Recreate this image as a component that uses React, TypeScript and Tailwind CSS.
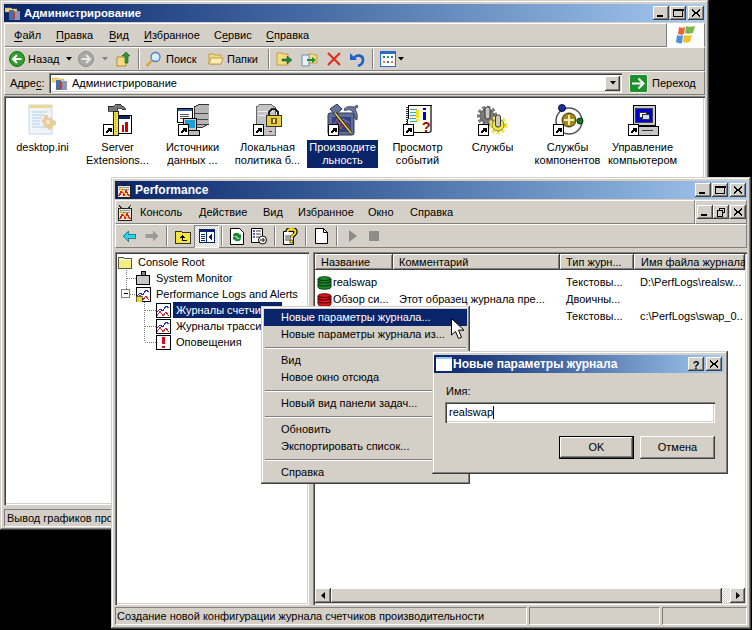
import React from 'react';

const frame = 'bg-[#d4d0c8] shadow-[inset_-1px_-1px_#404040,inset_1px_1px_#d4d0c8,inset_-2px_-2px_#808080,inset_2px_2px_#fff]';
const btn = 'bg-[#d4d0c8] shadow-[inset_-1px_-1px_#404040,inset_1px_1px_#fff,inset_-2px_-2px_#808080]';
const sunken = 'shadow-[inset_1px_1px_#808080,inset_2px_2px_#404040,inset_-1px_-1px_#fff,inset_-2px_-2px_#d4d0c8]';
const thin = 'border border-t-white border-l-white border-r-[#808080] border-b-[#808080]';
const thinIn = 'border border-t-[#808080] border-l-[#808080] border-r-white border-b-white';
const titleBg = 'bg-gradient-to-r from-[#0a246a] to-[#a6caf0]';
const dither = 'bg-[repeating-conic-gradient(#fff_0_25%,#d4d0c8_0_50%)] bg-[length:2px_2px]';

const Sep = () => <div className="mx-px h-[20px] w-[2px] border-l border-r border-l-[#808080] border-r-white" />;

const CapBtn = ({ kind }: { kind: 'min' | 'max' | 'close' | 'help' | 'restore' }) => (
  <div className={`flex h-[14px] w-[16px] items-center justify-center ${btn}`}>
    <svg width="12" height="10" viewBox="0 0 12 10" shapeRendering="crispEdges">
      {kind === 'min' && <rect x="2" y="7" width="6" height="2" fill="#000" />}
      {kind === 'max' && <path d="M1.5 1.5h9v7h-9zM1 1h10v1H1z" fill="none" stroke="#000" />}
      {kind === 'close' && <path d="M2.5 1l3.5 3.5L9.5 1l1 1L7 5l3.5 3-1 1L6 5.5 2.5 9l-1-1L5 5 1.5 2z" fill="#000" />}
      {kind === 'help' && <text x="6" y="9.5" textAnchor="middle" fontSize="11" fontWeight="700" fontFamily="Liberation Sans">?</text>}
      {kind === 'restore' && <path d="M4.5 3V1h5v4.500H7.5M2 3.500h5v5.500H2z" fill="none" stroke="#000" />}
    </svg>
  </div>
);

const Shortcut = () => (
  <g shapeRendering="crispEdges">
    <rect x="1.5" y="20.5" width="10" height="11" fill="#fff" stroke="#000" />
    <path d="M4 29l4-4M5.5 24.5h3.500V28" fill="none" stroke="#000" strokeWidth="1.5" />
  </g>
);

const AdminSmall = () => (
  <svg width="16" height="16" viewBox="0 0 16 16">
    <path d="M0 3h6l1 1h5v3H0z" fill="#f3d77e" stroke="#b99a3c" strokeWidth=".5" />
    <rect x="4" y="5" width="5" height="10" fill="#4a6fa8" />
    <rect x="9" y="6" width="6" height="9" fill="#8a97b5" />
    <rect x="8" y="7" width="2" height="7" fill="#c7362a" />
  </svg>
);

const PerfSmall = () => (
  <svg width="16" height="16" viewBox="0 0 16 16" shapeRendering="crispEdges">
    <rect x="1.5" y="3.5" width="13" height="12" fill="#e8e4d8" stroke="#222" />
    <path d="M3 5h10M3 7h10" stroke="#9a9a9a" />
    <path d="M3 14l3-6 2 5 2-4 3 5" fill="none" stroke="#d0202a" strokeWidth="1.5" />
    <path d="M4 6l7 8" stroke="#e8d030" strokeWidth="1.5" />
    <path d="M2 0l3 4M14 0l-3 4" stroke="#333" />
  </svg>
);

const DesktopIni = () => (
  <svg width="32" height="32" viewBox="0 0 32 32">
    <rect x="2" y="1" width="23" height="29" fill="#eef4fc" stroke="#cdd6e4" />
    <rect x="2" y="1" width="23" height="3" fill="#ecd992" />
    <path d="M5 8h15M5 11h12M5 14h10M5 17h8M5 20h8M5 23h14" stroke="#b8cce8" />
    <path d="M17 11h4v3l3-1 2 3 3 1v4l-3 1-1 3-3 1-2-2-3-1-1-4-2-2 3-3z" fill="#e8cf9a" />
    <circle cx="21" cy="18" r="2" fill="#f6ead0" />
  </svg>
);

const ServerExt = () => (
  <svg width="32" height="32" viewBox="0 0 32 32" shapeRendering="crispEdges">
    <path d="M6 2h6l2-2h4l6 5-3 1-3-2h-3v3h-9z" fill="#777" stroke="#111" strokeWidth=".7" />
    <rect x="13" y="11" width="16" height="18" fill="#fff" stroke="#000" />
    <rect x="14" y="12" width="14" height="3" fill="#0a246a" />
    <rect x="20" y="21" width="2" height="7" fill="#c00" />
    <rect x="23" y="18" width="3" height="10" fill="#c00" />
    <rect x="11" y="7" width="5" height="24" fill="#f0e040" stroke="#222" />
    <path d="M13 9v20" stroke="#999" strokeDasharray="1 1" />
    <Shortcut />
  </svg>
);

const DataSources = () => (
  <svg width="32" height="32" viewBox="0 0 32 32" shapeRendering="crispEdges">
    <path d="M17 3l6-3h9v20l-6 3h-9z" fill="#b6b6b6" stroke="#333" />
    <path d="M18 9h13M18 15h13M18 20h13" stroke="#444" />
    <rect x="0.5" y="4.5" width="15" height="14" fill="#fff" stroke="#000" />
    <rect x="1" y="5" width="14" height="2" fill="#2a5db0" />
    <path d="M3 10h9M3 12h9M3 14h7" stroke="#555" />
    <rect x="6.5" y="14.5" width="13" height="12" fill="#ccc" stroke="#000" />
    <rect x="8" y="16" width="10" height="8" fill="#18a0d8" />
    <rect x="10" y="26.5" width="12" height="5" fill="#bbb" stroke="#000" />
    <Shortcut />
  </svg>
);

const LocalPolicy = () => (
  <svg width="32" height="32" viewBox="0 0 32 32" shapeRendering="crispEdges">
    <path d="M4 3l5-3h9l5 3v28H4z" fill="#c4c4c4" stroke="#666" />
    <path d="M6 7h15M6 11h15" stroke="#eee" />
    <rect x="17" y="27" width="3" height="1" fill="#c00" />
    <path d="M17 12V8l3-3h3l3 3v4" fill="none" stroke="#222" strokeWidth="2" />
    <rect x="14.5" y="11.5" width="15" height="11" fill="#e6cf3a" stroke="#333" />
    <rect x="19" y="14" width="6" height="6" fill="#6f5a10" />
    <rect x="21" y="15" width="2" height="4" fill="#f6e98a" />
    <Shortcut />
  </svg>
);

const Perf = () => (
  <svg width="32" height="32" viewBox="0 0 32 32">
    <rect x="1" y="9" width="26" height="22" rx="2" fill="#5f6f99" stroke="#2a3350" />
    <rect x="5" y="13" width="19" height="15" fill="#35427e" />
    <path d="M6 24l4-9 4 10 4-8 5 8" fill="none" stroke="#c0455c" />
    <path d="M6 19l5 3 5-7 7 4" fill="none" stroke="#5e88e0" />
    <path d="M3 5l7-5 5 5-7 6z" fill="#67749a" stroke="#2a3350" />
    <path d="M8 9l16 20" stroke="#222" strokeWidth="3" />
    <path d="M8 9l16 20" stroke="#e8d84a" strokeWidth="1.5" />
    <path d="M17 5c3-3 7-3 10-2l3-2 1 2-3 2c2 3 3 7 2 11l-2-1c0-3-1-5-3-8-3-2-5-1-7 0z" fill="#67749a" stroke="#2a3350" strokeWidth=".7" />
    <Shortcut />
  </svg>
);

const EventLog = () => (
  <svg width="32" height="32" viewBox="0 0 32 32" shapeRendering="crispEdges">
    <path d="M7 1.5h22v25l-2 2H5z" fill="#fdfbe8" stroke="#000" />
    <path d="M29 2v25l-2 2" fill="none" stroke="#666" strokeWidth="2" />
    <path d="M5 3v19" stroke="#333" strokeWidth="2" strokeDasharray="1 1" />
    <path d="M8 5h7M8 8h6M8 11h7M8 14h6M8 17h7" stroke="#2aa8c8" />
    <rect x="14" y="6" width="3" height="8" fill="#ffe000" />
    <rect x="14" y="15" width="3" height="2" fill="#ffe000" />
    <rect x="21" y="4" width="3" height="2" fill="#0000d0" />
    <rect x="21" y="8" width="3" height="8" fill="#0000d0" />
    <text x="20" y="28" fontSize="14" fontWeight="700" fill="#8a1010" fontFamily="Liberation Sans">?</text>
    <Shortcut />
  </svg>
);

const Gear = ({ x, y, r, fill }: { x: number; y: number; r: number; fill: string }) => (
  <g>
    <circle cx={x} cy={y} r={r + 1.5} fill="none" stroke={fill} strokeWidth="3.5" strokeDasharray="3 2" />
    <circle cx={x} cy={y} r={r} fill={fill} stroke="#333" strokeWidth=".6" />
  </g>
);

const Services = () => (
  <svg width="32" height="32" viewBox="0 0 32 32">
    <Gear x={10} y={12} r={7} fill="#7c7c7c" />
    <rect x="8" y="3" width="5" height="12" rx="2" fill="#c8c8c8" stroke="#333" />
    <Gear x={21} y={21} r={6} fill="#f0e63c" />
    <rect x="18.5" y="11" width="5" height="12" rx="2" fill="#c8c8c8" stroke="#333" />
    <Shortcut />
  </svg>
);

const Components = () => (
  <svg width="32" height="32" viewBox="0 0 32 32">
    <circle cx="17" cy="17" r="13" fill="none" stroke="#555" strokeWidth="1.5" />
    <circle cx="17" cy="16" r="7" fill="#a08a20" stroke="#3a3000" />
    <path d="M17 11v10M12 16h10" stroke="#f6eeb0" strokeWidth="2" />
    <circle cx="10" cy="4" r="3.5" fill="#1c2f9e" stroke="#0a1040" />
    <circle cx="28" cy="17" r="3" fill="#0c7a20" stroke="#033010" />
    <Shortcut />
  </svg>
);

const Computer = () => (
  <svg width="32" height="32" viewBox="0 0 32 32" shapeRendering="crispEdges">
    <path d="M6 1.5h22v20H6z" fill="#c8c8c8" stroke="#000" />
    <rect x="8" y="4" width="17" height="14" fill="#0000c8" stroke="#444" />
    <rect x="12" y="8" width="7" height="5" fill="#fff" stroke="#333" />
    <rect x="15" y="10" width="7" height="5" fill="#cde" stroke="#333" />
    <path d="M3 22.5h28v9H3z" fill="#c8c8c8" stroke="#000" />
    <rect x="15" y="26" width="11" height="1" fill="#333" />
    <Shortcut />
  </svg>
);

const items: { icon: React.ReactNode; lines: string[]; selected?: boolean }[] = [
  { icon: <DesktopIni />, lines: ['desktop.ini'] },
  { icon: <ServerExt />, lines: ['Server', 'Extensions...'] },
  { icon: <DataSources />, lines: ['Источники', 'данных ...'] },
  { icon: <LocalPolicy />, lines: ['Локальная', 'политика б...'] },
  { icon: <Perf />, lines: ['Производите', 'льность'], selected: true },
  { icon: <EventLog />, lines: ['Просмотр', 'событий'] },
  { icon: <Services />, lines: ['Службы'] },
  { icon: <Components />, lines: ['Службы', 'компонентов'] },
  { icon: <Computer />, lines: ['Управление', 'компьютером'] },
];

const Acc = ({ a, b = '', pre = '' }: { a: string; b?: string; pre?: string }) => (
  <span>
    {pre}
    <span className="underline underline-offset-2">{a}</span>
    {b}
  </span>
);

const RoundArrow = ({ gray }: { gray?: boolean }) => (
  <svg width="16" height="16" viewBox="0 0 16 16">
    <circle cx="8" cy="8" r="7.5" fill={gray ? '#a9a9a5' : '#2f9e2f'} stroke={gray ? '#8c8c88' : '#1b6e1b'} />
    {gray ? (
      <path d="M3.5 8h8M8 4l4 4-4 4" fill="none" stroke="#e8e8e4" strokeWidth="2" />
    ) : (
      <path d="M12.5 8h-8M8 4L4 8l4 4" fill="none" stroke="#fff" strokeWidth="2" />
    )}
  </svg>
);

const Caret = ({ className = '' }: { className?: string }) => (
  <svg width="6" height="4" viewBox="0 0 6 4" className={className}>
    <path d="M0 0h6L3 3.5z" fill="currentColor" />
  </svg>
);

const FolderSmall = ({ open }: { open?: boolean }) => (
  <svg width="16" height="16" viewBox="0 0 16 16">
    <path d="M1 3h5l1 1h6v9H1z" fill="#f0d98a" stroke="#c0a040" />
    {open && <path d="M3 7h12l-2 6H1z" fill="#fbeeb8" stroke="#c0a040" />}
  </svg>
);

const RootFolder = () => (
  <svg width="16" height="16" viewBox="0 0 16 16" shapeRendering="crispEdges">
    <path d="M1.5 3.5h5l1 1h7v10h-13z" fill="#f4ee80" stroke="#555" />
    <path d="M2 5h12" stroke="#fff" />
  </svg>
);

const ExplorerWindow = () => (
  <div className={`absolute left-0 top-0 flex h-[530px] w-[709px] flex-col p-[4px] ${frame}`}>
    <div className={`flex h-[18px] shrink-0 items-center pl-[1px] pr-[1px] ${titleBg}`}>
      <AdminSmall />
      <span className="ml-[3px] flex-1 text-[11.3px] font-bold text-white">Администрирование</span>
      <CapBtn kind="min" />
      <div className="w-[1px]" />
      <CapBtn kind="max" />
      <div className="w-[2px]" />
      <CapBtn kind="close" />
    </div>
    <div className="mt-[1px] flex h-[24px] shrink-0">
      <div className={`flex flex-1 items-center pl-[9px] ${thin}`}>
        <span className="w-[42px]"><Acc a="Ф" b="айл" /></span>
        <span className="w-[53px]"><Acc a="П" b="равка" /></span>
        <span className="w-[35px]"><Acc a="В" b="ид" /></span>
        <span className="w-[70px]"><Acc a="И" b="збранное" /></span>
        <span className="w-[52px]"><Acc pre="С" a="е" b="рвис" /></span>
        <span><Acc a="С" b="правка" /></span>
      </div>
      <div className="flex w-[38px] items-center justify-center border border-t-white border-l-white border-r-[#808080] border-b-white bg-white">
        <svg width="20" height="18" viewBox="0 0 20 18">
          <path d="M3 1c2 1 4 1 6 0l-1 7c-2 1-4 1-6 0z" fill="#e8673a" />
          <path d="M10 0c2 1 5 1 9 0l-2 7c-3 1-6 1-8 0z" fill="#7db84a" />
          <path d="M1 9c2 1 4 1 6 0l-1 8c-2 1-4 0-6-1z" fill="#4f8fdc" />
          <path d="M8 9c2 1 5 1 8 0l-2 7c-3 1-5 1-7 0z" fill="#f2c22e" />
        </svg>
      </div>
    </div>
    <div className={`flex h-[24px] shrink-0 items-center pl-[4px] ${thin}`}>
      <RoundArrow />
      <span className="ml-[3px] w-[38px]">Назад</span>
      <Caret className="text-black" />
      <div className="ml-[6px]"><RoundArrow gray /></div>
      <Caret className="ml-[8px] text-[#808080]" />
      <svg width="16" height="16" viewBox="0 0 16 16" className="ml-[8px]">
        <path d="M1 6h9v9H1z" fill="#f5dc80" stroke="#b09030" />
        <path d="M9 12V5H6l4-4 4 4h-2v7z" fill="#2a9a3a" stroke="#14601e" strokeWidth=".6" />
      </svg>
      <div className="ml-[5px]"><Sep /></div>
      <svg width="17" height="17" viewBox="0 0 17 17" className="ml-[4px]">
        <circle cx="10.5" cy="6" r="4.5" fill="#d8ecfb" stroke="#4a7fb8" strokeWidth="1.3" />
        <path d="M7 9.5L1.500 15" stroke="#d9a441" strokeWidth="2.5" />
      </svg>
      <span className="ml-[4px] w-[38px]">Поиск</span>
      <div className="ml-[4px]"><FolderSmall open /></div>
      <span className="ml-[3px] w-[38px]">Папки</span>
      <div className="ml-[2px]"><Sep /></div>
      <svg width="17" height="16" viewBox="0 0 17 16" className="ml-[5px]">
        <path d="M1 2h5l1 1h5v11H1z" fill="#f5dc80" stroke="#c0a040" />
        <path d="M6 8h5V5l5 4-5 4v-3H6z" fill="#1f8a3a" stroke="#0e5020" strokeWidth=".5" />
      </svg>
      <svg width="17" height="16" viewBox="0 0 17 16" className="ml-[8px]">
        <path d="M7 3h5l1 1h3v8H7z" fill="#f5dc80" stroke="#c0a040" />
        <path d="M1 4h7v11H1z" fill="#e8f0fa" stroke="#6a8ab0" />
        <path d="M6 8h5V6l4 3-4 3v-2H6z" fill="#1f8a3a" />
      </svg>
      <svg width="16" height="16" viewBox="0 0 16 16" className="ml-[8px]">
        <path d="M2 2l12 12M14 2L2 14" stroke="#e0301e" strokeWidth="2.2" />
      </svg>
      <svg width="16" height="16" viewBox="0 0 16 16" className="ml-[7px]">
        <path d="M5 7c3-4 9-3 9 2 0 3-2 5-5 6" fill="none" stroke="#1f5fc8" strokeWidth="2.6" />
        <path d="M1 2v7h7z" fill="#1f5fc8" />
      </svg>
      <div className="ml-[6px]"><Sep /></div>
      <svg width="16" height="16" viewBox="0 0 16 16" className="ml-[5px]" shapeRendering="crispEdges">
        <rect x=".5" y=".5" width="15" height="15" fill="#fff" stroke="#2a6fc0" />
        <rect x="1" y="1" width="14" height="2" fill="#2a6fc0" />
        <rect x="3" y="5" width="2" height="2" fill="#2a6fc0" /><rect x="7" y="5" width="2" height="2" fill="#3aa04a" /><rect x="11" y="5" width="2" height="2" fill="#2a6fc0" />
        <rect x="3" y="10" width="2" height="2" fill="#e8803a" /><rect x="7" y="10" width="2" height="2" fill="#2a6fc0" /><rect x="11" y="10" width="2" height="2" fill="#e8803a" />
      </svg>
      <Caret className="ml-[2px] text-black" />
    </div>
    <div className={`flex h-[24px] shrink-0 items-center pl-[5px] ${thin}`}>
      <span className="w-[39px]">Адре<span className="underline underline-offset-2">с</span>:</span>
      <div className={`flex h-[20px] w-[573px] items-center pl-[3px] pr-[2px] bg-white ${sunken}`}>
        <AdminSmall />
        <span className="ml-[4px] flex-1">Администрирование</span>
        <div className={`flex h-[15px] w-[15px] items-center justify-center ${btn}`}><Caret className="text-black" /></div>
      </div>
      <svg width="19" height="19" viewBox="0 0 19 19" className="ml-[7px]">
        <rect x=".5" y=".5" width="18" height="18" rx="2" fill="#1f8f2e" stroke="#e9f3e9" />
        <path d="M3 9.5h11M9.500 4.500l5 5-5 5" fill="none" stroke="#fff" strokeWidth="2" />
      </svg>
      <span className="ml-[4px]">Переход</span>
    </div>
    <div className={`mt-[1px] h-[409px] shrink-0 bg-white pl-[1px] pt-[8px] ${sunken}`}>
      <div className="grid grid-cols-[repeat(9,75px)]">
        {items.map((it) => (
          <div key={it.lines[0] + it.lines.length} className="flex flex-col items-center">
            <div className="h-[32px] w-[32px]">{it.icon}</div>
            <div className={`mt-[4px] flex h-[28px] w-[71px] flex-col items-center overflow-hidden whitespace-nowrap py-[1px] ${it.selected ? 'bg-[#0a246a] text-white' : 'text-black'}`}>
              {it.lines.map((l) => (
                <span key={l} className="leading-[13px]">{l}</span>
              ))}
            </div>
          </div>
        ))}
      </div>
    </div>
    <div className={`mt-[4px] flex h-[18px] shrink-0 items-center pl-[2px] ${thinIn}`}>Вывод графиков производительности</div>
  </div>
);

const Trend = ({ gears }: { gears?: boolean }) => (
  <svg width="15" height="15" viewBox="0 0 15 15" shapeRendering="crispEdges">
    <rect x=".5" y=".5" width="14" height="14" fill="#fff" stroke="#000" />
    <path d="M1 9l3-3 3 2 3-5 3 2" fill="none" stroke="#1c2fc8" />
    <path d="M1 13l3-5 3 5 3-4 3 4" fill="none" stroke="#d0202a" />
    {gears && <path d="M0 9h6v6H0z" fill="#e8d830" stroke="#333" strokeWidth=".7" />}
  </svg>
);

const Cyl = ({ color, dark }: { color: string; dark: string }) => (
  <svg width="15" height="14" viewBox="0 0 15 14">
    <path d="M1 3c0-3 13-3 13 0v8c0 3-13 3-13 0z" fill={color} stroke={dark} />
    <path d="M1 5.5c2 2 11 2 13 0M1 8.5c2 2 11 2 13 0M1 3c2 2 11 2 13 0" fill="none" stroke={dark} strokeWidth="1.2" />
  </svg>
);

const TreeRow = ({ indent, icon, children, selected }: { indent: number; icon: React.ReactNode; children: React.ReactNode; selected?: boolean }) => (
  <div className="flex h-[16px] items-center" style={{ paddingLeft: indent }}>
    <div className="flex h-[16px] w-[16px] items-center justify-center">{icon}</div>
    <span className={`ml-[2px] flex h-[16px] items-center whitespace-nowrap px-[3px] ${selected ? 'w-[109px] overflow-hidden bg-[#0a246a] text-white' : ''}`}>{children}</span>
  </div>
);

const LogRow = ({ icon, name, comment, type, file }: { icon: React.ReactNode; name: string; comment: string; type: string; file: string }) => (
  <div className="flex h-[17px] items-center whitespace-nowrap">
    <div className="flex w-[78px] items-center pl-[2px]">
      <div className="w-[16px]">{icon}</div>
      <span>{name}</span>
    </div>
    <span className="w-[167px] pl-[6px]">{comment}</span>
    <span className="w-[74px] pl-[6px]">{type}</span>
    <span className="pl-[6px]">{file}</span>
  </div>
);

const PerfWindow = () => (
  <div className={`absolute left-[111px] top-[177px] flex h-[452px] w-[640px] flex-col p-[4px] ${frame}`}>
    <div className={`flex h-[18px] shrink-0 items-center pl-[1px] pr-[1px] ${titleBg}`}>
      <PerfSmall />
      <span className="ml-[3px] flex-1 text-[12px] font-bold text-white">Performance</span>
      <CapBtn kind="min" />
      <div className="w-[1px]" />
      <CapBtn kind="max" />
      <div className="w-[2px]" />
      <CapBtn kind="close" />
    </div>
    <div className="mt-[1px] flex h-[24px] shrink-0">
      <div className={`flex flex-1 items-center pl-[1px] pt-[1px] ${thin}`}>
        <PerfSmall />
        <span className="ml-[7px] w-[59px]">Консоль</span>
        <span className="w-[64px]">Действие</span>
        <span className="w-[35px]">Вид</span>
        <span className="w-[70px]">Избранное</span>
        <span className="w-[42px]">Окно</span>
        <span>Справка</span>
      </div>
      <div className={`flex w-[52px] items-center justify-center ${thin}`}>
        <CapBtn kind="min" />
        <CapBtn kind="restore" />
        <div className="w-[1px]" />
        <CapBtn kind="close" />
      </div>
    </div>
    <div className={`flex h-[24px] shrink-0 items-center pl-[5px] ${thin}`}>
      <svg width="14" height="12" viewBox="0 0 14 12" shapeRendering="crispEdges" className="ml-[1px]">
        <path d="M.5 6L6 .5V4h7.5v4H6v3.5z" fill="#2fd4e8" stroke="#107080" strokeWidth=".8" />
      </svg>
      <svg width="14" height="12" viewBox="0 0 14 12" className="ml-[9px]">
        <path d="M13.5 6L8 .5V4H.5v4H8v3.5z" fill="#9a9a96" />
      </svg>
      <div className="ml-[6px]"><Sep /></div>
      <svg width="16" height="15" viewBox="0 0 16 15" className="ml-[6px]" shapeRendering="crispEdges">
        <path d="M.5 2.5h6l1 1h8v11H.5z" fill="#f2e63a" stroke="#333" />
        <path d="M8 6L4.500 9H7v3h5v-1H8V9h2.500z" fill="#000" />
      </svg>
      <div className={`ml-[3px] flex h-[23px] w-[25px] items-center justify-center ${dither} border border-t-[#808080] border-l-[#808080] border-r-white border-b-white`}>
        <svg width="16" height="14" viewBox="0 0 16 14" shapeRendering="crispEdges">
          <rect x=".5" y=".5" width="15" height="13" fill="#fff" stroke="#0a246a" />
          <rect x="1" y="1" width="14" height="2" fill="#0a246a" />
          <path d="M2 5h4M2 7h4M2 9h4M2 11h4" stroke="#0a246a" />
          <path d="M7.5 3v10" stroke="#0a246a" />
          <path d="M13 5v6L9 8z" fill="#0a246a" />
        </svg>
      </div>
      <div className="ml-[1px]"><Sep /></div>
      <svg width="14" height="17" viewBox="0 0 14 17" className="ml-[6px]">
        <path d="M.5.5h9l4 4v12H.5z" fill="#fff" stroke="#000" />
        <path d="M3 7c1-3 6-3 7 0l1-1v4H7l1-1c-1-1-3-1-4 0zM11 11c-1 3-6 3-7 0l-1 1V9h4l-1 1c1 1 3 1 4 0z" fill="#168a2e" />
      </svg>
      <svg width="16" height="17" viewBox="0 0 16 17" className="ml-[7px]">
        <path d="M.5.5h11v14H.5z" fill="#fff" stroke="#000" />
        <path d="M2 3h2M2 6h2M2 9h2" stroke="#1c2fc8" strokeWidth="1.5" />
        <path d="M5 3h5M5 6h5M5 9h3" stroke="#444" />
        <circle cx="11.5" cy="12" r="4" fill="#fff" stroke="#000" />
        <path d="M9 12h4M11.5 10l2 2-2 2" fill="none" stroke="#000" />
      </svg>
      <div className="ml-[6px]"><Sep /></div>
      <svg width="15" height="17" viewBox="0 0 15 17" className="ml-[6px]">
        <path d="M.5 3.5h10v13H.5z" fill="#fff" stroke="#000" />
        <path d="M2 8h6M2 10h6M2 12h6" stroke="#444" />
        <path d="M4 4c0-5 9-5 9 0 0 3-4 3-4 6" fill="none" stroke="#000" strokeWidth="3.5" />
        <path d="M4.5 4c0-4 8-4 8 0 0 3-4 3-4 6" fill="none" stroke="#ffe000" strokeWidth="2" />
        <rect x="7" y="12" width="3" height="3" fill="#ffe000" stroke="#000" strokeWidth=".6" />
      </svg>
      <div className="ml-[6px]"><Sep /></div>
      <svg width="13" height="16" viewBox="0 0 13 16" className="ml-[7px]">
        <path d="M.5.5h8l4 4v11H.5z" fill="#fff" stroke="#000" />
        <path d="M8.5.5v4h4" fill="none" stroke="#000" />
      </svg>
      <div className="ml-[7px]"><Sep /></div>
      <svg width="8" height="12" viewBox="0 0 8 12" className="ml-[10px]"><path d="M0 0l8 6-8 6z" fill="#8c8c88" /></svg>
      <div className="ml-[12px] h-[10px] w-[10px] bg-[#8c8c88]" />
    </div>
    <div className="mt-[4px] flex min-h-0 flex-1 gap-[4px]">
      <div className={`relative w-[194px] shrink-0 bg-white pl-[2px] pt-[2px] ${sunken}`}>
        <svg width="50" height="100" viewBox="0 0 50 100" className="absolute left-[2px] top-[2px]" shapeRendering="crispEdges">
          <path d="M9.5 16v24M27.5 48v40M9.5 24h10M13 40h6M27.5 56h11M27.5 72h11M27.500 88h11" stroke="#808080" strokeDasharray="1 1" fill="none" />
          <rect x="4.5" y="35.5" width="8" height="8" fill="#fff" stroke="#808080" />
          <path d="M6.5 39.5h4" stroke="#000" />
        </svg>
        <div className="relative">
          <TreeRow indent={0} icon={<RootFolder />}>Console Root</TreeRow>
          <TreeRow indent={18} icon={
            <svg width="16" height="16" viewBox="0 0 16 16" shapeRendering="crispEdges">
              <rect x="1.5" y="5.5" width="13" height="9" fill="#c8c8c8" stroke="#000" />
              <rect x="6" y="1" width="4" height="4" fill="#888" stroke="#000" />
            </svg>
          }>System Monitor</TreeRow>
          <TreeRow indent={18} icon={<Trend gears />}>Performance Logs and Alerts</TreeRow>
          <TreeRow indent={38} icon={<Trend />} selected>Журналы счетчиков</TreeRow>
          <TreeRow indent={38} icon={<Trend />}>Журналы трассировки</TreeRow>
          <TreeRow indent={38} icon={
            <svg width="15" height="15" viewBox="0 0 15 15" shapeRendering="crispEdges">
              <rect x=".5" y=".5" width="14" height="14" fill="#fff" stroke="#000" />
              <rect x="6" y="2" width="3" height="7" fill="#d0101a" />
              <rect x="6" y="10.5" width="3" height="2.5" fill="#d0101a" />
            </svg>
          }>Оповещения</TreeRow>
        </div>
      </div>
      <div className={`flex min-w-0 flex-1 flex-col overflow-hidden p-[2px] ${sunken} bg-white`}>
        <div className="flex h-[16px] shrink-0 whitespace-nowrap">
          <div className={`flex w-[78px] items-center pl-[6px] ${btn}`}>Название</div>
          <div className={`flex w-[167px] items-center pl-[6px] ${btn}`}>Комментарий</div>
          <div className={`flex w-[74px] items-center pl-[6px] ${btn}`}>Тип журн...</div>
          <div className={`flex min-w-0 flex-1 items-center overflow-hidden pl-[7px] ${btn}`}>Имя файла журнала</div>
        </div>
        <div className="flex-1 overflow-hidden pt-[4px]">
          <LogRow icon={<Cyl color="#1f8a2a" dark="#063d0e" />} name="realswap" comment="" type="Текстовы..." file="D:\PerfLogs\realsw..." />
          <LogRow icon={<Cyl color="#e01a1a" dark="#5a0606" />} name="Обзор си..." comment="Этот образец журнала пре..." type="Двоичны..." file="" />
          <LogRow icon={<Cyl color="#1f8a2a" dark="#063d0e" />} name="" comment="" type="Текстовы..." file="c:\PerfLogs\swap_0.." />
        </div>
        <div className="flex h-[15px] shrink-0 bg-[#d4d0c8]">
          <div className={`flex w-[16px] items-center justify-center ${btn}`}><svg width="4" height="7" viewBox="0 0 4 7"><path d="M4 0L0 3.5 4 7z" /></svg></div>
          <div className={`w-[391px] ${btn}`} />
          <div className={`w-[8px] ${dither}`} />
          <div className={`flex flex-1 items-center justify-center ${btn}`}><svg width="4" height="7" viewBox="0 0 4 7"><path d="M0 0l4 3.5L0 7z" /></svg></div>
        </div>
      </div>
    </div>
    <div className="mt-[2px] flex h-[18px] shrink-0 gap-[2px]">
      <div className={`flex w-[412px] items-center pl-[1px] ${thinIn}`}>Создание новой конфигурации журнала счетчиков производительности</div>
      <div className={`w-[131px] ${thinIn}`} />
      <div className={`flex-1 ${thinIn}`} />
    </div>
  </div>
);

const MenuItem = ({ label, active }: { label: string; active?: boolean }) => (
  <div className={`flex h-[17px] items-center whitespace-nowrap pl-[17px] ${active ? 'bg-[#0a246a] text-white' : ''}`}>{label}</div>
);
const MenuSep = () => (
  <div className="mx-[1px] mb-[3px] mt-[4px] h-[2px] border-t border-b border-t-[#808080] border-b-white" />
);

const ContextMenu = () => (
  <div className={`absolute left-[261px] top-[306px] w-[209px] p-[3px] ${frame}`}>
    <MenuItem label="Новые параметры журнала..." active />
    <MenuItem label="Новые параметры журнала из..." />
    <MenuSep />
    <MenuItem label="Вид" />
    <MenuItem label="Новое окно отсюда" />
    <MenuSep />
    <MenuItem label="Новый вид панели задач..." />
    <MenuSep />
    <MenuItem label="Обновить" />
    <MenuItem label="Экспортировать список..." />
    <MenuSep />
    <MenuItem label="Справка" />
  </div>
);

const Dialog = () => (
  <div className={`absolute left-[432px] top-[351px] flex h-[123px] w-[296px] flex-col pl-[2px] pr-[4px] pt-[4px] ${frame}`}>
    <div className={`flex h-[18px] shrink-0 items-center pr-[2px] ${titleBg}`}>
      <svg width="16" height="16" viewBox="0 0 16 16" shapeRendering="crispEdges" className="ml-[2px]">
        <rect x="0" y="1" width="16" height="14" fill="#fff" />
        <rect x="0" y="1" width="16" height="2" fill="#9fc3ea" />
      </svg>
      <span className="ml-[1px] flex-1 text-[12px] font-bold text-white">Новые параметры журнала</span>
      <CapBtn kind="help" />
      <div className="w-[2px]" />
      <CapBtn kind="close" />
    </div>
    <div className="ml-[12px] mt-[12px] leading-[13px]">Имя:</div>
    <div className={`ml-[11px] mt-[4px] flex h-[21px] w-[270px] items-center bg-white pl-[4px] ${sunken}`}>
      realswap<span className="h-[13px] w-px bg-black" />
    </div>
    <div className="ml-[125px] mt-[13px] flex gap-[6px]">
      <div className="flex h-[23px] w-[75px] items-center justify-center border border-black bg-[#d4d0c8] shadow-[inset_-1px_-1px_#404040,inset_1px_1px_#fff,inset_-2px_-2px_#808080]">OK</div>
      <div className={`flex h-[23px] w-[75px] items-center justify-center ${btn}`}>Отмена</div>
    </div>
  </div>
);

export default function App() {
  return (
    <div className="relative h-[630px] w-[752px] overflow-hidden bg-black font-['Liberation_Sans',sans-serif] text-[11px] leading-[13px] text-black">
      <ExplorerWindow />
      <PerfWindow />
      <ContextMenu />
      <Dialog />
      <svg width="16" height="22" viewBox="0 0 16 22" className="absolute left-[451px] top-[318px]">
        <path d="M.5.5v16.500l4-3.500 3 7 3-1.300-3-7h5.500z" fill="#fff" stroke="#000" />
      </svg>
    </div>
  );
}
